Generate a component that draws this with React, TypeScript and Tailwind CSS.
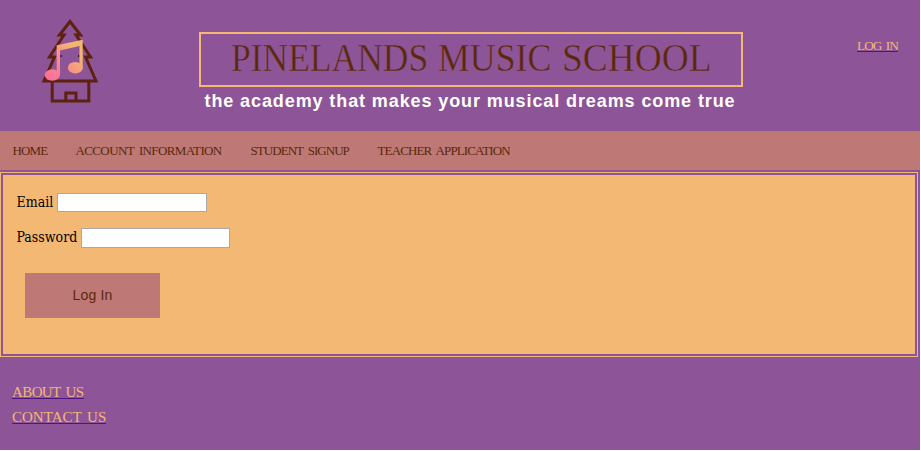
const titleWords = [
  { text: 'PINELANDS', box: 'w-[207px]', scale: 'scale-x-[0.887]' },
  { text: 'MUSIC', box: 'w-[124px]', scale: 'scale-x-[0.895]' },
  { text: 'SCHOOL', box: 'w-[150px]', scale: 'scale-x-[0.935]' },
];

const navItems = [
  { text: 'HOME', box: 'w-[63px]', tracking: 'tracking-[-0.9px]' },
  { text: 'ACCOUNT INFORMATION', box: 'w-[175px]', tracking: 'tracking-[-0.62px]' },
  { text: 'STUDENT SIGNUP', box: 'w-[127px]', tracking: 'tracking-[-0.95px]' },
  { text: 'TEACHER APPLICATION', box: 'w-[140px]', tracking: 'tracking-[-0.87px]' },
];

function Logo() {
  return (
    <svg className="ml-[40px] mt-[16px] h-[90px] w-[60px] shrink-0" viewBox="0 0 60 90" fill="none">
      <defs>
        <linearGradient id="note" x1="8" y1="60" x2="38" y2="36" gradientUnits="userSpaceOnUse">
          <stop offset="0" stopColor="#fb6f9a" />
          <stop offset="0.45" stopColor="#f98a8a" />
          <stop offset="1" stopColor="#f2b76f" />
        </linearGradient>
      </defs>
      <g stroke="#5c210f" strokeWidth="3">
        <path d="M30 5.500 L40.500 19 H36 L50.500 41 H45.500 L56 65 H4 L14.500 41 H9.500 L24 19 H19.500 Z" />
        <path d="M12.200 65 V85 H48.800 V65 M25.800 85 V77 H36 V85" />
      </g>
      <path d="M20 34 L39.500 30 V50 L20 54 Z" fill="#8d5597" />
      <g fill="#2b1420">
        <rect x="20.500" y="39" width="1.200" height="2" />
        <rect x="38" y="39" width="1.200" height="2" />
      </g>
      <g fill="url(#note)">
        <path d="M16.700 29.300 L42.700 23.800 V52 H39.500 V30 L20 34.500 V59 H16.700 Z" />
        <ellipse cx="12.300" cy="59" rx="7.600" ry="5.800" />
        <ellipse cx="35.300" cy="51.700" rx="7.500" ry="5.800" />
      </g>
    </svg>
  );
}

export default function App() {
  return (
    <div className="h-[451px] w-[921px] overflow-hidden bg-white font-['Liberation_Serif',serif]">
      <div className="h-[450px] w-[920px] bg-[#8d5597]">
        <header className="flex h-[131px] items-start">
          <Logo />
          <div className="ml-[99px] mt-[32px] w-[544px]">
            <h1 className="flex h-[55px] whitespace-nowrap border-2 border-[#f3b873] pl-[29.500px] text-[40px] leading-[48px] text-[#5b2808] [-webkit-text-stroke:0.5px_#8d5597]">
              {titleWords.map((word) => (
                <span key={word.text} className={`shrink-0 ${word.box}`}>
                  <span className={`inline-block origin-left ${word.scale}`}>{word.text}</span>
                </span>
              ))}
            </h1>
            <p className="whitespace-nowrap pl-[5.500px] pt-[2px] font-['Liberation_Sans',sans-serif] text-[18px] font-bold leading-[24px] tracking-[0.9px] text-white">
              the academy that makes your musical dreams come true
            </p>
          </div>
          <a className="ml-[114px] mt-[39px] h-[13px] border-b border-[#4b1589] text-[13.300px] leading-[14px] tracking-[-0.95px] text-[#f3b873] [word-spacing:2px]">
            LOG IN
          </a>
        </header>
        <nav className="flex h-[39px] bg-[#be7976] pl-[12.500px] text-[13px] leading-[39px] text-[#5b2808] [word-spacing:2.5px]">
          {navItems.map((item) => (
            <a key={item.text} className={`shrink-0 whitespace-nowrap ${item.box} ${item.tracking}`}>
              {item.text}
            </a>
          ))}
        </nav>
        <main className="mt-[2px] h-[185px] w-[918px] border border-[#f3b873]">
          <form className="h-[183px] border-2 border-[#8d5597] bg-[#f3b873] pl-[13.500px] pt-[18px] font-['DejaVu_Serif_Condensed','DejaVu_Serif',serif] text-[14px] leading-[20px] text-black">
            <label className="flex h-[19px] items-center">
              <span className="-mt-px w-[40.500px]">Email</span>
              <input className="h-[19px] w-[150px] border border-[#a9a9a9] bg-white" />
            </label>
            <label className="mt-[16px] flex h-[20px] items-center">
              <span className="-mt-[3px] w-[64.500px]">Password</span>
              <input type="password" className="h-[20px] w-[149px] border border-[#a9a9a9] bg-white" />
            </label>
            <button
              type="button"
              className="ml-[8.500px] mt-[25px] block h-[45px] w-[135px] bg-[#be7976] pb-[2px] font-['Liberation_Sans',sans-serif] text-[14px] tracking-[0.2px] text-[#5b2808]"
            >
              Log In
            </button>
          </form>
        </main>
        <footer className="flex flex-col items-start pl-[12px] pt-[28px] text-[15px] leading-[14px] text-[#f3b873] [word-spacing:2px]">
          <a className="h-[14px] border-b border-[#4b1589] tracking-[-0.6px]">ABOUT US</a>
          <a className="mt-[11px] h-[14px] border-b border-[#4b1589] tracking-[0px]">CONTACT US</a>
        </footer>
      </div>
    </div>
  );
}
